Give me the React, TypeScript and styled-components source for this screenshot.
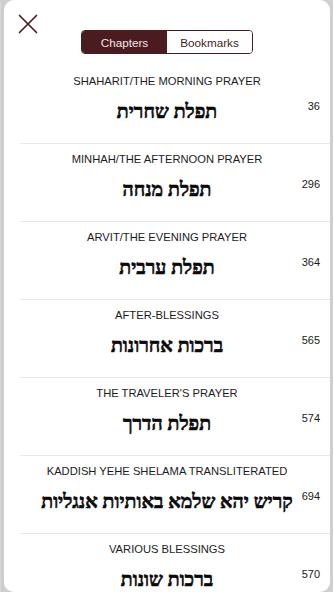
import React, { useState } from 'react';
import styled, { createGlobalStyle } from 'styled-components';

const GlobalStyle = createGlobalStyle`
  html, body {
    margin: 0;
    padding: 0;
    height: 100%;
    overflow: hidden;
  }
  body {
    background: #1a1a1a;
    font-family: "Liberation Sans", Arial, sans-serif;
  }
  #root {
    height: 100%;
  }
`;

const maroon = '#4a1c20';

const Backdrop = styled.div`
  height: 592px;
  display: flex;
  background: linear-gradient(90deg, #c8c8c8 0, #e6e6e6 1px, #b9b9b9 2px, #dcdcdc 3px, #c4c4c4 4px);
  background-size: 4px 100%;
  background-repeat: no-repeat;
  background-color: #cfcfcf;
  padding: 0 3px 0 4px;
`;

const Sheet = styled.div`
  flex: 1;
  background: #fff;
  border-radius: 10px;
  overflow: hidden;
  display: flex;
  flex-direction: column;
`;

const Header = styled.div`
  height: 66px;
  display: grid;
  grid-template-columns: 1fr auto 1fr;
  align-items: start;
`;

const CloseButton = styled.button`
  justify-self: start;
  margin: 14px 0 0 14px;
  padding: 0;
  width: 20px;
  height: 20px;
  border: none;
  background: transparent;
  cursor: pointer;
`;

const Segmented = styled.div`
  margin-top: 30px;
  display: flex;
  width: 172px;
  height: 24px;
  box-sizing: border-box;
  border: 1px solid ${maroon};
  border-radius: 4px;
  overflow: hidden;
`;

const Segment = styled.button<{ $active?: boolean }>`
  flex: 1;
  border: none;
  margin: 0;
  padding: 0;
  font-family: "Liberation Sans", Arial, sans-serif;
  font-size: 11.7px;
  background: ${p => (p.$active ? maroon : '#fff')};
  color: ${p => (p.$active ? '#f3e6e6' : maroon)};
  cursor: pointer;
`;

const List = styled.div`
  flex: 1;
  overflow: hidden;
`;

const Row = styled.div`
  margin-left: 16px;
  border-bottom: 1px solid #e8e8ec;
`;

const RowInner = styled.div`
  margin-left: -16px;
  padding: 9px 0 19px;
  display: flex;
  flex-direction: column;
  gap: 12px;
`;

const Title = styled.div`
  text-align: center;
  font-size: 11.2px;
  line-height: 13px;
  color: #1c1c1c;
  text-transform: uppercase;
`;

const HebrewLine = styled.div`
  display: grid;
  grid-template-columns: 34px minmax(0, 1fr) 34px;
  align-items: start;
`;

const Hebrew = styled.div`
  grid-column: 2;
  text-align: center;
  direction: rtl;
  font-family: "Liberation Serif", "DejaVu Serif", serif;
  font-weight: 700;
  font-size: 19.5px;
  line-height: 24px;
  color: #0a0a0a;
  -webkit-text-stroke: 0.6px #0a0a0a;
  white-space: nowrap;
`;

const Page = styled.div`
  grid-column: 3;
  justify-self: end;
  padding-right: 10px;
  font-size: 11px;
  line-height: 13px;
  color: #1a1a1a;
`;

const chapters = [
  { title: 'Shaharit/The Morning Prayer', hebrew: 'תפלת שחרית', page: 36 },
  { title: 'Minhah/The Afternoon Prayer', hebrew: 'תפלת מנחה', page: 296 },
  { title: 'Arvit/The Evening Prayer', hebrew: 'תפלת ערבית', page: 364 },
  { title: 'After-Blessings', hebrew: 'ברכות אחרונות', page: 565 },
  { title: "The Traveler's Prayer", hebrew: 'תפלת הדרך', page: 574 },
  { title: 'Kaddish Yehe Shelama Transliterated', hebrew: 'קריש יהא שלמא באותיות אנגליות', page: 694 },
  { title: 'Various Blessings', hebrew: 'ברכות שונות', page: 570 },
];

const App: React.FC = () => {
  const [tab, setTab] = useState<'chapters' | 'bookmarks'>('chapters');

  return (
    <>
      <GlobalStyle />
      <Backdrop>
        <Sheet>
          <Header>
            <CloseButton aria-label="Close">
              <svg width="20" height="20" viewBox="0 0 20 20">
                <path d="M1.5 1.5 L18.5 18.5 M18.5 1.5 L1.5 18.5" stroke={maroon} strokeWidth="1.7" strokeLinecap="round" />
              </svg>
            </CloseButton>
            <Segmented>
              <Segment $active={tab === 'chapters'} onClick={() => setTab('chapters')}>
                Chapters
              </Segment>
              <Segment $active={tab === 'bookmarks'} onClick={() => setTab('bookmarks')}>
                Bookmarks
              </Segment>
            </Segmented>
          </Header>
          <List>
            {chapters.map(c => (
              <Row key={c.title}>
                <RowInner>
                  <Title>{c.title}</Title>
                  <HebrewLine>
                    <Hebrew>{c.hebrew}</Hebrew>
                    <Page>{c.page}</Page>
                  </HebrewLine>
                </RowInner>
              </Row>
            ))}
          </List>
        </Sheet>
      </Backdrop>
    </>
  );
};

export default App;
